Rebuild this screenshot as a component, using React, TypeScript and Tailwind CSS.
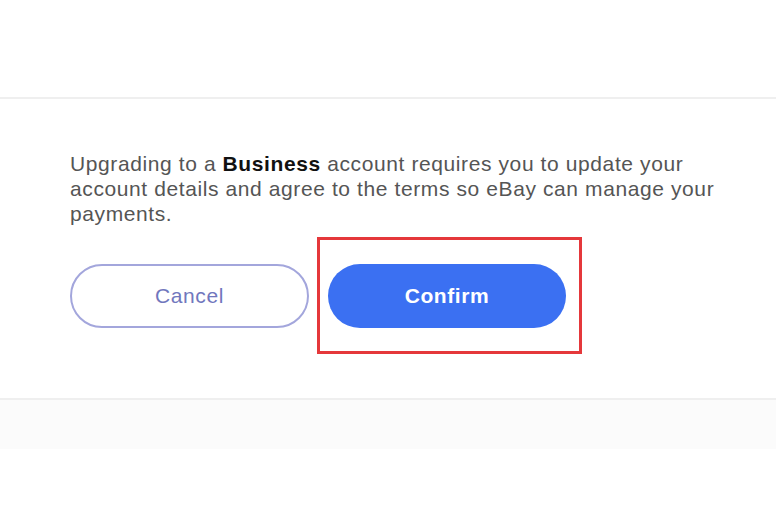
export default function App() {
  return (
    <div className="h-[512px] w-[776px] bg-white font-['Liberation_Sans',Arial,sans-serif]">
      <div className="h-[97px]" />
      <section className="border-y-2 border-[#efefef] px-[70px] pt-[52px] pb-[70px]">
        <p className="w-[668px] text-[21px] leading-[25px] tracking-[0.6px] text-[#555]">
          Upgrading to a <b className="font-bold text-[#111]">Business</b> account requires you to update your account
          details and agree to the terms so eBay can manage your payments.
        </p>
        <div className="mt-[38px] flex gap-[19px]">
          <button className="h-16 w-[239px] rounded-full border-2 border-[#a3a6dc] text-[21px] tracking-[0.6px] text-[#7177bd]">
            Cancel
          </button>
          <div className="relative">
            <button className="h-16 w-[238px] rounded-full bg-[#3b70f2] text-[21px] font-bold tracking-[0.6px] text-white">
              Confirm
            </button>
            <div className="pointer-events-none absolute -top-[27px] -right-[16px] -bottom-[26px] -left-[11px] border-[3px] border-[#e5383b]" />
          </div>
        </div>
      </section>
      <div className="h-[49px] bg-[#fbfbfb]" />
    </div>
  );
}
